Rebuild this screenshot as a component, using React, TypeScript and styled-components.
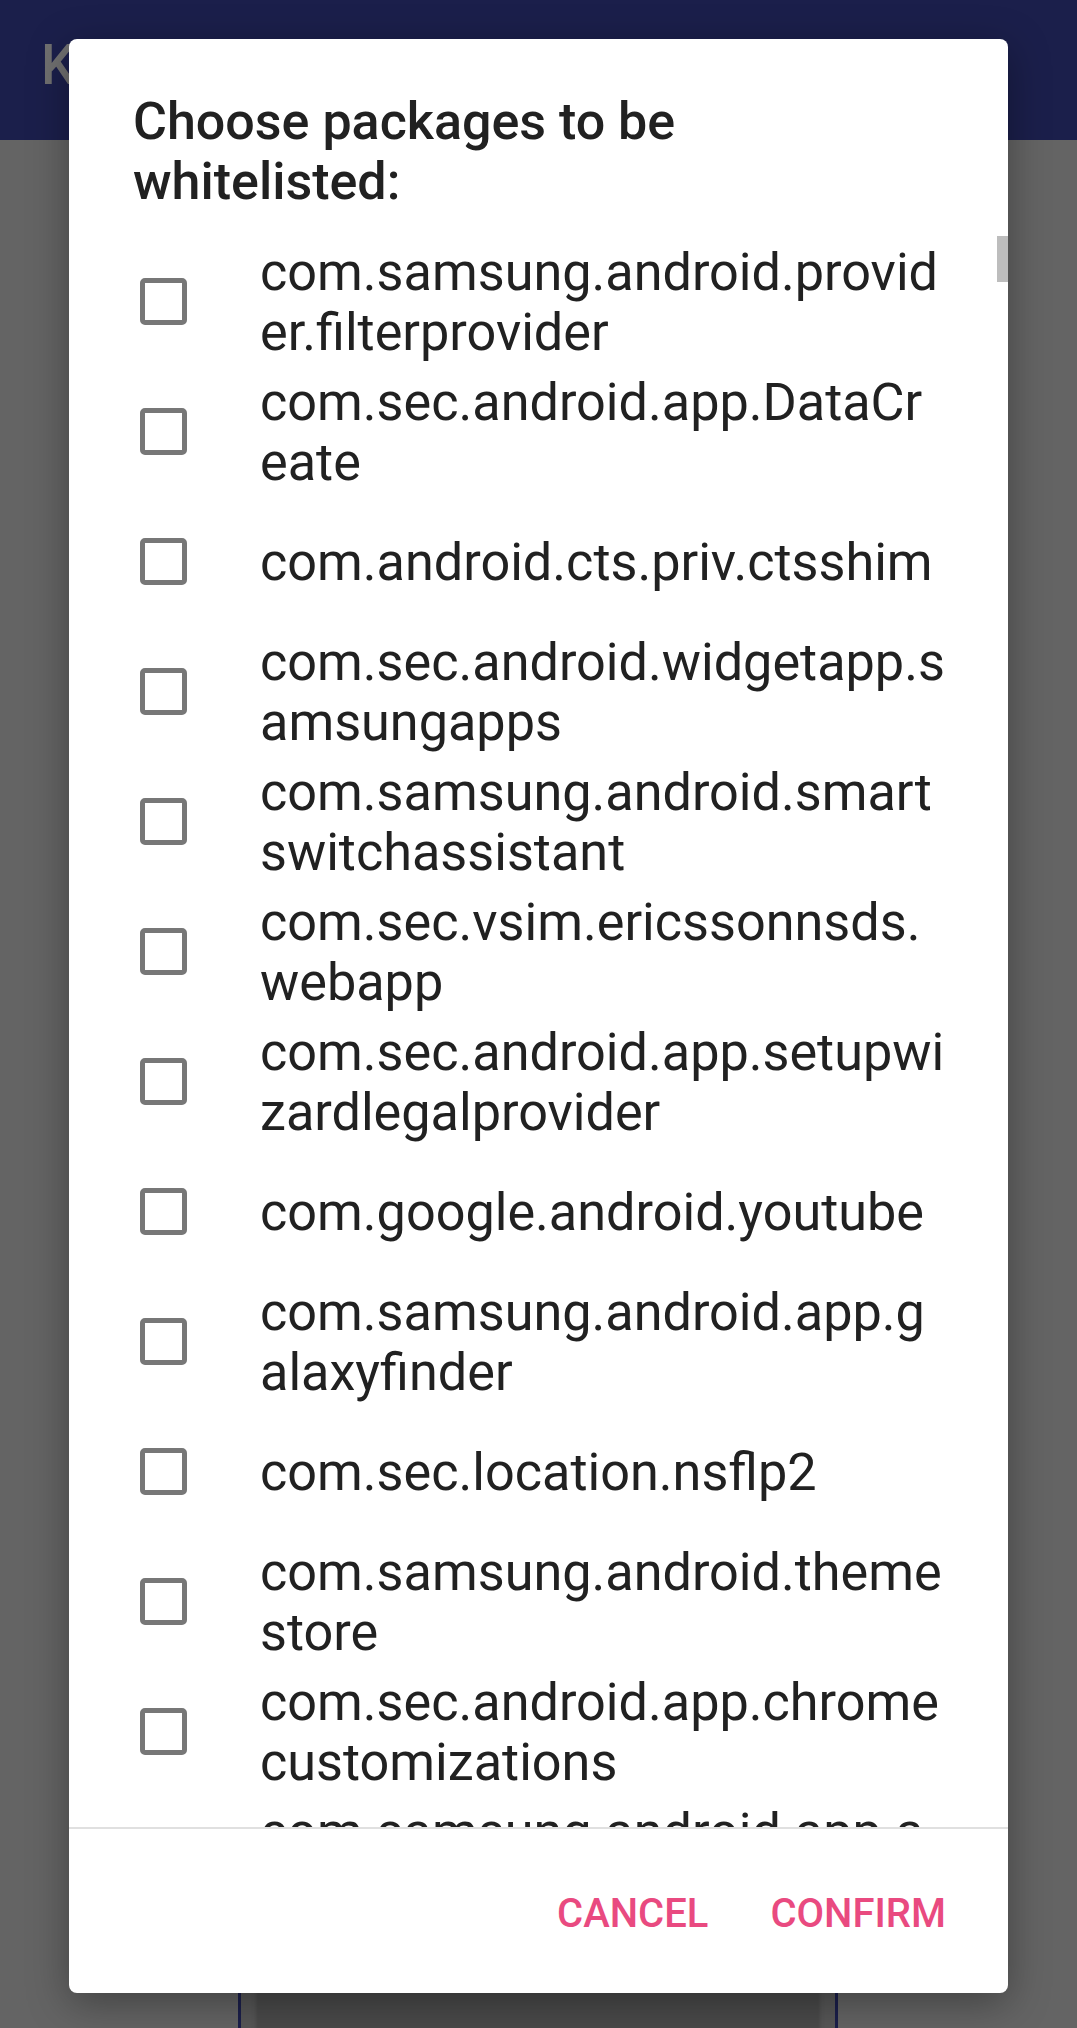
import React from 'react';
import styled, { createGlobalStyle } from 'styled-components';

const packages = [
  'com.samsung.android.provider.filterprovider',
  'com.sec.android.app.DataCreate',
  'com.android.cts.priv.ctsshim',
  'com.sec.android.widgetapp.samsungapps',
  'com.samsung.android.smartswitchassistant',
  'com.sec.vsim.ericssonnsds.webapp',
  'com.sec.android.app.setupwizardlegalprovider',
  'com.google.android.youtube',
  'com.samsung.android.app.galaxyfinder',
  'com.sec.location.nsflp2',
  'com.samsung.android.themestore',
  'com.sec.android.app.chromecustomizations',
  'com.samsung.android.app.aodservice',
];

const GlobalStyle = createGlobalStyle`
  html, body {
    margin: 0;
    padding: 0;
    background: #646464;
  }
  body {
    font-family: Roboto, 'Noto Sans', 'Liberation Sans', sans-serif;
  }
`;

const App = () => {
  return (
    <>
      <GlobalStyle />
      <Screen>
        <AppBar>
          <AppTitle>Knox Sample</AppTitle>
        </AppBar>
        <Body>
          <CertPanel>
            <InstallButton>INSTALL CERTIFICATE</InstallButton>
          </CertPanel>
        </Body>

        <Dialog>
          <Title>Choose packages to be whitelisted:</Title>
          <List>
            {packages.map((name) => (
              <Row key={name}>
                <CheckBox />
                <PackageName>{name}</PackageName>
              </Row>
            ))}
            <ScrollThumb />
          </List>
          <Divider />
          <Actions>
            <ActionButton>CANCEL</ActionButton>
            <ActionButton>CONFIRM</ActionButton>
          </Actions>
        </Dialog>
      </Screen>
    </>
  );
};

const Screen = styled.div`
  position: relative;
  width: 1077px;
  height: 2028px;
  overflow: hidden;
  display: flex;
  flex-direction: column;
  background-color: #646464;
`;

const AppBar = styled.div`
  height: 140px;
  flex: none;
  background-color: #1b1f4b;
  display: flex;
  align-items: center;
  padding-left: 41px;
  box-sizing: border-box;
`;

const AppTitle = styled.div`
  color: #707070;
  font-size: 55px;
  font-weight: 500;
  margin-top: -10px;
`;

const Body = styled.div`
  flex: 1;
  display: flex;
  align-items: flex-start;
  padding: 1818px 0 0 238px;
`;

const CertPanel = styled.div`
  width: 600px;
  height: 200px;
  padding: 0 17px;
  box-sizing: border-box;
  border-left: 3px solid #1b1f4b;
  border-right: 3px solid #1b1f4b;
  background-color: #575757;
`;

const InstallButton = styled.div`
  height: 200px;
  background-color: #4a4a4a;
  color: #151515;
  font-size: 44px;
  font-weight: 700;
  text-align: center;
  padding-top: 196px;
  line-height: 44px;
  box-sizing: border-box;
  box-shadow: 0 2px 6px rgba(0, 0, 0, 0.3);
`;

const Dialog = styled.div`
  position: absolute;
  left: 69px;
  top: 39px;
  width: 939px;
  height: 1954px;
  background-color: #ffffff;
  border-radius: 8px;
  box-shadow: 0 10px 40px rgba(0, 0, 0, 0.35);
  display: flex;
  flex-direction: column;
  overflow: hidden;
`;

const Title = styled.div`
  flex: none;
  padding: 53px 200px 0 64px;
  font-size: 52px;
  font-weight: 500;
  line-height: 60px;
  color: #212121;
  margin-bottom: 24px;
`;

const List = styled.div`
  position: relative;
  flex: 1;
  overflow: hidden;
`;

const Row = styled.div`
  display: flex;
  align-items: center;
  min-height: 130px;
  padding-left: 71px;
`;

const CheckBox = styled.div`
  flex: none;
  width: 47px;
  height: 47px;
  box-sizing: border-box;
  border: 5px solid #777777;
  border-radius: 5px;
  margin-right: 73px;
`;

const PackageName = styled.div`
  width: 686px;
  font-size: 52.2px;
  line-height: 60px;
  color: #212121;
  word-break: break-all;
  padding-top: 3px;
`;

const ScrollThumb = styled.div`
  position: absolute;
  top: 0;
  right: 0;
  width: 11px;
  height: 46px;
  background-color: #bdbdbd;
`;

const Divider = styled.div`
  flex: none;
  height: 2px;
  background-color: #e0e0e0;
`;

const Actions = styled.div`
  flex: none;
  height: 164px;
  box-sizing: border-box;
  display: flex;
  justify-content: flex-end;
  align-items: flex-start;
  gap: 62px;
  padding: 65px 62px 0 0;
`;

const ActionButton = styled.div`
  font-size: 40px;
  line-height: 40px;
  font-weight: 500;
  color: #e94a80;
`;

export default App;
